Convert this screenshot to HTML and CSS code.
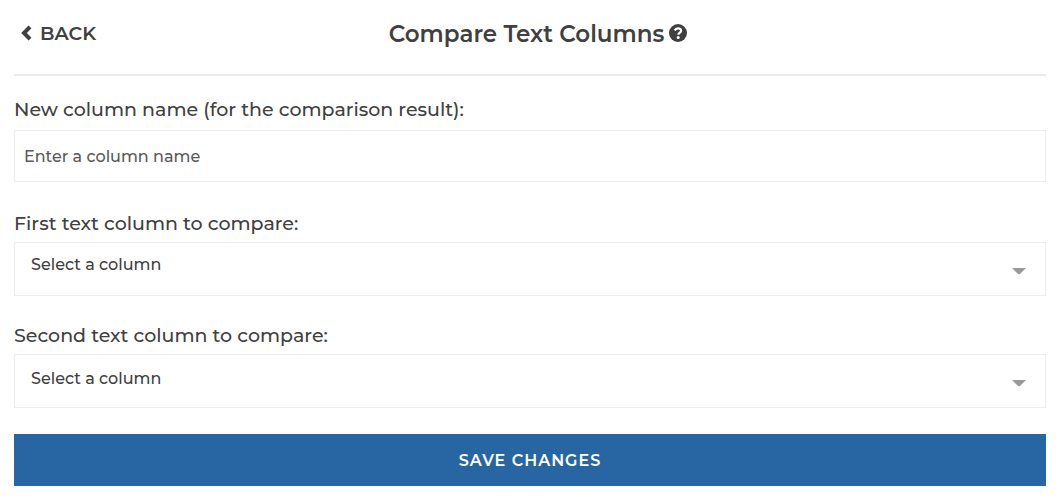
FILE: index.html
```html
<!DOCTYPE html>
<html lang="en">
<head>
<meta charset="utf-8">
<meta name="viewport" content="width=device-width, initial-scale=1">
<title>Compare Text Columns</title>
<link rel="stylesheet" href="styles.css">
</head>
<body>
<main class="panel">
  <header class="panel-header">
    <button class="back" type="button">
      <svg class="back-icon" viewBox="0 0 12 16" aria-hidden="true"><path d="M9 1.900 3 8l6 6.100" fill="none" stroke="currentColor" stroke-width="4"/></svg>
      <span>BACK</span>
    </button>
    <div class="heading">
      <h1 class="title">Compare Text Columns</h1>
      <button class="help" type="button" aria-label="Help">
        <svg class="help-icon" viewBox="0 0 18 18" aria-hidden="true"><circle cx="9" cy="9" r="9" fill="currentColor"/><path d="M5.700 6.500C6.400 5 7.400 4.300 9 4.300c1.900 0 3.100 1.100 3.100 2.500 0 2-2.800 1.900-2.800 4" fill="none" stroke="#fff" stroke-width="2.200"/><circle cx="9.200" cy="13.400" r="1.500" fill="#fff"/></svg>
      </button>
    </div>
  </header>
  <form class="form">
    <div class="field field-name">
      <label class="label" for="name">New column name (for the comparison result):</label>
      <input class="control text-input" id="name" type="text" placeholder="Enter a column name">
    </div>
    <div class="field">
      <label class="label" for="first">First text column to compare:</label>
      <div class="select-wrap">
        <select class="control select select-first" id="first"><option>Select a column</option></select>
        <svg class="caret" viewBox="0 0 14 7" aria-hidden="true"><path d="M0 0h14L8.500 5.600Q7 7 5.500 5.600Z" fill="#999"/></svg>
      </div>
    </div>
    <div class="field">
      <label class="label" for="second">Second text column to compare:</label>
      <div class="select-wrap">
        <select class="control select select-second" id="second"><option>Select a column</option></select>
        <svg class="caret" viewBox="0 0 14 7" aria-hidden="true"><path d="M0 0h14L8.500 5.600Q7 7 5.500 5.600Z" fill="#999"/></svg>
      </div>
    </div>
    <button class="save" type="button">SAVE CHANGES</button>
  </form>
</main>
</body>
</html>
```

FILE: styles.css
```css
* {
  box-sizing: border-box;
}

body {
  margin: 0;
  background: #fff;
  color: #404040;
  font-family: Montserrat, Inter, sans-serif;
  font-weight: 500;
}

button,
input,
select {
  font: inherit;
  color: inherit;
}

.panel {
  padding: 0 14px 16px;
}

.panel-header {
  display: grid;
  grid-template-columns: 1fr auto 1fr;
  align-items: center;
  padding: 18px 0 24px;
  border-bottom: 2px solid #ebebeb;
}

.back,
.help {
  display: flex;
  align-items: center;
  padding: 0;
  border: 0;
  background: none;
  cursor: pointer;
}

.back {
  justify-self: start;
  gap: 7px;
  padding-left: 7px;
  font-size: 19px;
  font-weight: 600;
  line-height: 32px;
}

.back-icon {
  width: 12px;
  height: 16px;
  margin-bottom: 2px;
}

.heading {
  display: flex;
  align-items: center;
  gap: 5px;
  padding-left: 16px;
}

.title {
  margin: 0;
  font-size: 23px;
  font-weight: 600;
  line-height: 32px;
}

.help-icon {
  width: 18px;
  height: 18px;
  margin-bottom: 2px;
}

.form {
  padding-top: 21px;
}

.field {
  display: flex;
  flex-direction: column;
  gap: 5px;
  margin-bottom: 26px;
}

.field + .field {
  padding-top: 1px;
}

.field-name {
  gap: 7px;
  margin-bottom: 28px;
}

.label {
  font-size: 19px;
  line-height: 26px;
}

.control {
  width: 100%;
  border: 1px solid #eee;
  border-radius: 0;
  background: #fff;
  font-size: 16px;
}

.text-input {
  height: 52px;
  padding: 0 9px;
}

.text-input::placeholder {
  color: #595959;
  opacity: 1;
}

.select-wrap {
  position: relative;
  display: flex;
}

.select {
  height: 54px;
  padding: 0 48px 0 16px;
  appearance: none;
}

.select-first {
  padding-bottom: 10px;
}

.select-second {
  padding-bottom: 6px;
}

.caret {
  position: absolute;
  top: 26px;
  right: 20px;
  width: 14px;
  height: 7px;
  pointer-events: none;
}

.save {
  display: block;
  width: 100%;
  height: 52px;
  border: 0;
  background: #2766a3;
  color: #fff;
  font-size: 16px;
  font-weight: 600;
  letter-spacing: 1px;
  cursor: pointer;
}
```
